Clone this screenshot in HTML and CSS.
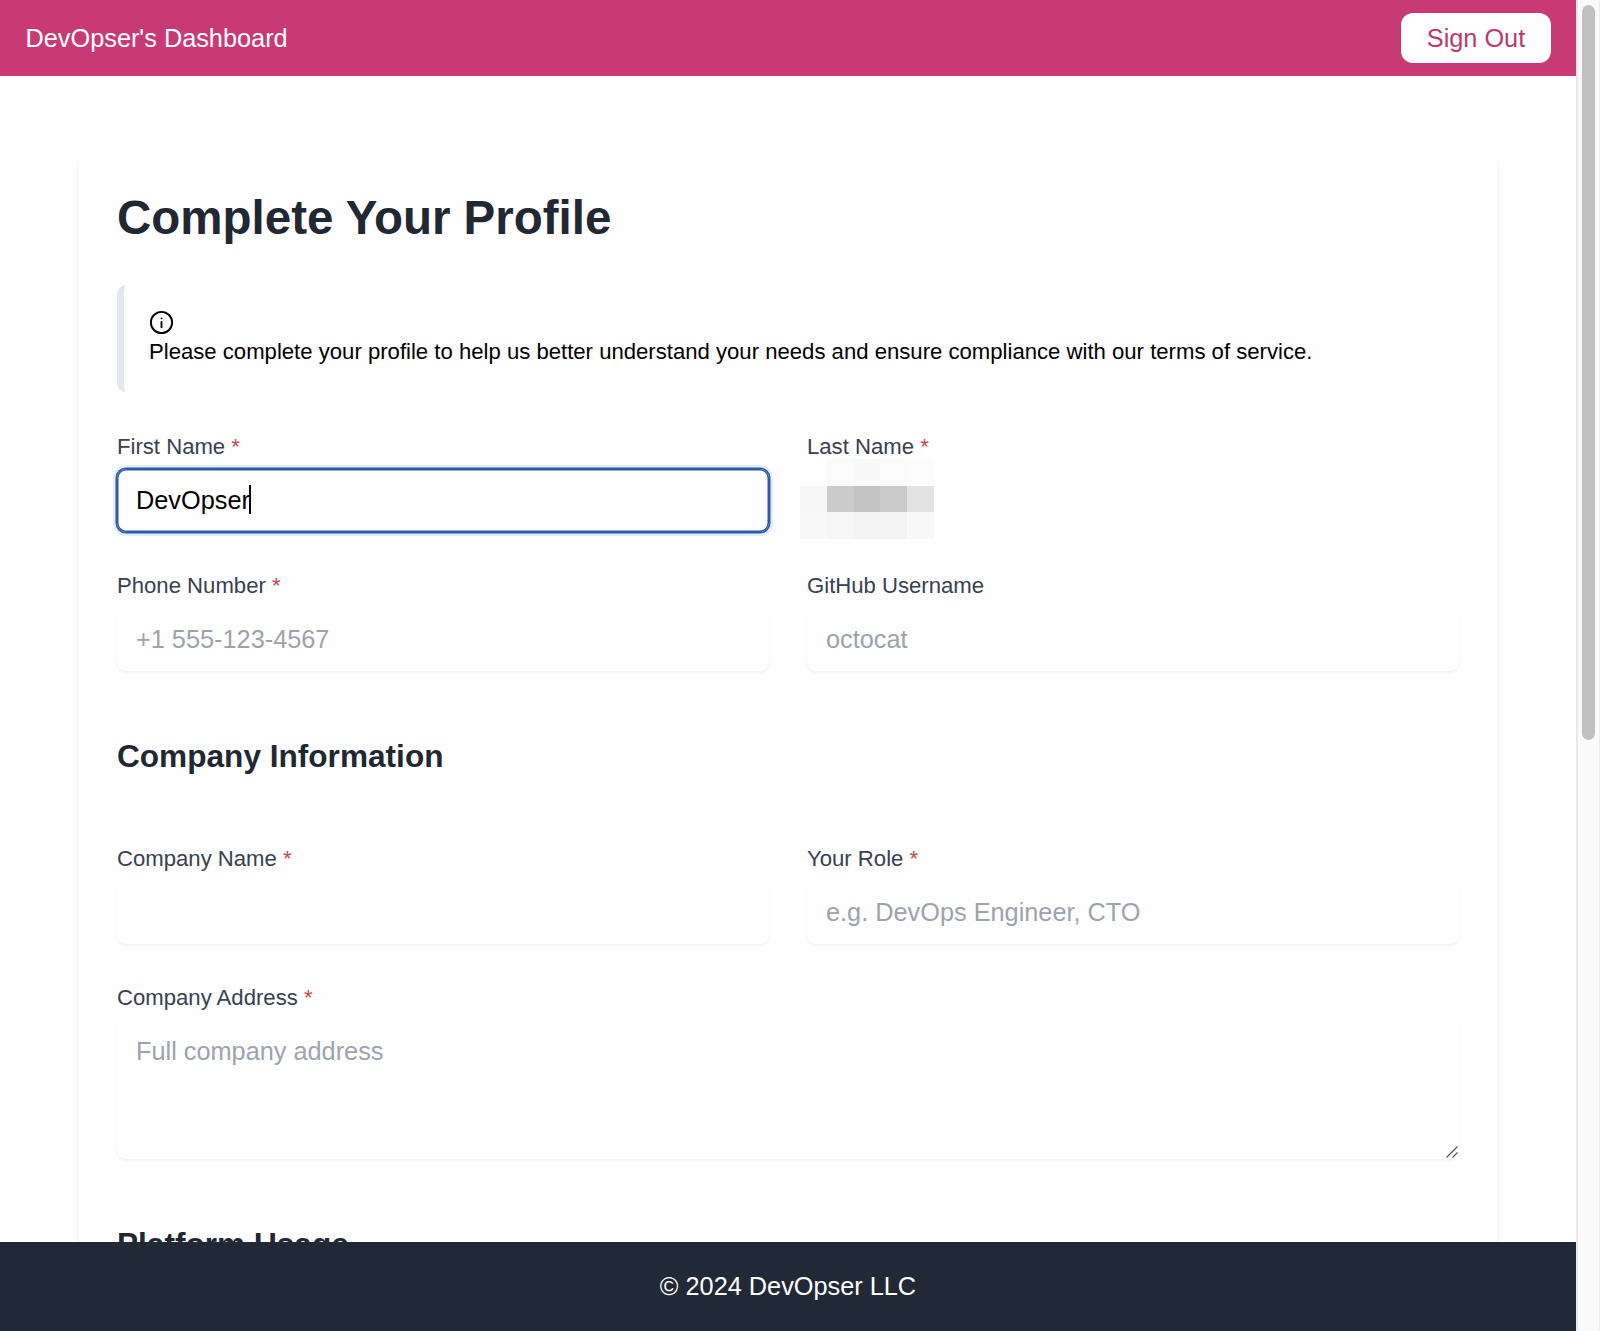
FILE: index.html
```html
<!DOCTYPE html>
<html lang="en">
<head>
    <meta charset="UTF-8">
    <meta name="viewport" content="width=device-width, initial-scale=1.0">
    <title>DevOpser's Dashboard</title>
    <link rel="stylesheet" href="styles.css">
</head>
<body>

    <div class="page">
        <header class="navbar">
            <span class="brand">DevOpser's Dashboard</span>
            <button class="sign-out">Sign Out</button>
        </header>

        <main class="content">
            <form class="card">
                <h1>Complete Your Profile</h1>

                <div class="alert">
                    <svg class="info-icon" viewBox="0 0 24 24" fill="none" stroke="currentColor" stroke-width="1.8" stroke-linecap="round" stroke-linejoin="round">
                        <circle cx="12" cy="12" r="10.2"/>
                        <path d="M12 16.5v-5M12 8h.01"/>
                    </svg>
                    <p>Please complete your profile to help us better understand your needs and ensure compliance with our terms of service.</p>
                </div>

                <!-- Personal details -->
                <div class="grid">
                    <div class="field focused">
                        <label for="first-name">First Name <span class="required">*</span></label>
                        <input type="text" id="first-name" value="DevOpser">
                        <span class="caret"></span>
                    </div>
                    <div class="field redacted">
                        <label for="last-name">Last Name <span class="required">*</span></label>
                        <input type="text" id="last-name">
                        <div class="mosaic">
                            <i></i><i class="s2"></i><i class="s3"></i><i class="s2"></i><i class="s1"></i>
                            <i class="s4"></i><i class="s7"></i><i class="s8"></i><i class="s7"></i><i class="s6"></i>
                            <i class="s3"></i><i class="s4"></i><i class="s5"></i><i class="s5"></i><i class="s3"></i>
                        </div>
                    </div>
                    <div class="field">
                        <label for="phone">Phone Number <span class="required">*</span></label>
                        <input type="tel" id="phone" placeholder="+1 555-123-4567">
                    </div>
                    <div class="field">
                        <label for="github">GitHub Username</label>
                        <input type="text" id="github" placeholder="octocat">
                    </div>
                </div>

                <!-- Company -->
                <h2>Company Information</h2>
                <div class="grid">
                    <div class="field">
                        <label for="company">Company Name <span class="required">*</span></label>
                        <input type="text" id="company">
                    </div>
                    <div class="field">
                        <label for="role">Your Role <span class="required">*</span></label>
                        <input type="text" id="role" placeholder="e.g. DevOps Engineer, CTO">
                    </div>
                    <div class="field wide">
                        <label for="address">Company Address <span class="required">*</span></label>
                        <textarea id="address" placeholder="Full company address"></textarea>
                        <svg class="grip" viewBox="0 0 12 12" stroke="#555" stroke-width="1.2" fill="none">
                            <path d="M0.5 11.5L11.5 0.5M6.5 11.5L11.5 6.5"/>
                        </svg>
                    </div>
                </div>

                <h2>Platform Usage</h2>
            </form>
        </main>

        <footer class="footer">&copy; 2024 DevOpser LLC</footer>
    </div>

    <div class="scrollbar"><div class="thumb"></div></div>

</body>
</html>
```
FILE: styles.css
```css
* {
    box-sizing: border-box;
}

body {
    margin: 0;
    height: 1331px;
    display: flex;
    overflow: hidden;
    background-color: #fefefe;
    color: #000;
    font-family: "Liberation Sans", Arial, sans-serif;
    font-size: 25.3px;
}

.page {
    flex: 1;
    min-width: 0;
    height: 1331px;
    display: flex;
    flex-direction: column;
}

.navbar {
    flex: none;
    height: 76px;
    padding: 0 25px 0 25.5px;
    display: flex;
    align-items: center;
    justify-content: space-between;
    background-color: #c83a74;
    color: #fff;
}

.sign-out {
    width: 150px;
    height: 50px;
    padding: 0;
    border: none;
    border-radius: 12px;
    background-color: #fff;
    color: #b83b70;
    font: inherit;
}

.content {
    flex: 1;
    min-height: 0;
    overflow: hidden;
    padding: 76px 79px 0;
}

.card {
    height: 1400px;
    padding: 38px;
    border-radius: 12px;
    background-color: #fefefe;
    box-shadow: 0 6px 9px -1px rgba(0, 0, 0, 0.05), 0 3px 6px -1px rgba(0, 0, 0, 0.03);
}

h1 {
    margin: 0 0 40px;
    color: #1f2833;
    font-size: 47.5px;
    line-height: 55px;
}

h2 {
    margin: 63px 0 65px;
    color: #1f2833;
    font-size: 31.6px;
    line-height: 44px;
}

.alert {
    height: 107px;
    margin-bottom: 39px;
    padding: 25px;
    border-left: 7px solid #e5e7eb;
    border-radius: 9px;
}

.info-icon {
    display: block;
    width: 25px;
    height: 25px;
}

.alert p {
    margin: 0;
    font-size: 22.14px;
    line-height: 34px;
    white-space: nowrap;
}

.grid {
    display: grid;
    grid-template-columns: 1fr 1fr;
    gap: 38px;
}

.field {
    position: relative;
    display: flex;
    flex-direction: column;
    gap: 6px;
}

.wide {
    grid-column: span 2;
}

label {
    color: #374151;
    font-size: 22.14px;
    line-height: 32px;
}

.required {
    color: #d0454a;
}

input, textarea {
    display: block;
    width: 100%;
    height: 63px;
    padding: 0 19px;
    border: none;
    border-radius: 9px;
    outline: none;
    background-color: #fefefe;
    box-shadow: 0 1.5px 3px rgba(0, 0, 0, 0.045);
    color: #000;
    font: inherit;
}

textarea {
    height: 139px;
    padding-top: 12px;
    line-height: 38px;
    resize: none;
}

input::placeholder, textarea::placeholder {
    color: #9ca3af;
    opacity: 1;
}

.focused input {
    box-shadow: inset 0 0 0 1.5px #2f5aa8, 0 0 0 1.5px #2f5aa8, 0 0 0 4px #e3edfb;
}

.caret {
    position: absolute;
    left: 132px;
    top: 54px;
    width: 2px;
    height: 29px;
    background-color: #000;
}

.redacted input {
    box-shadow: none;
}

/* pixelated last name */
.mosaic {
    position: absolute;
    left: -7px;
    top: 28px;
    display: grid;
    grid-template-columns: repeat(5, 26.8px);
    grid-template-rows: repeat(3, 26.5px);
}

.s1 { background-color: #fcfcfc; }
.s2 { background-color: #fbfbfb; }
.s3 { background-color: #f9f9f9; }
.s4 { background-color: #f6f6f6; }
.s5 { background-color: #f3f3f3; }
.s6 { background-color: #e3e3e3; }
.s7 { background-color: #cbcbcb; }
.s8 { background-color: #c4c4c4; }

.grip {
    position: absolute;
    right: 1px;
    bottom: 1px;
    width: 12px;
    height: 12px;
}

.footer {
    flex: none;
    height: 89px;
    display: flex;
    align-items: center;
    justify-content: center;
    background-color: #222936;
    color: #fff;
}

.scrollbar {
    width: 24px;
    padding: 5px 4px;
    border-left: 2px solid #e8e8e8;
    border-right: 1px solid #ededed;
    background-color: #fafafa;
}

.thumb {
    width: 13px;
    height: 735px;
    border-radius: 7px;
    background-color: #c1c1c1;
}
```
